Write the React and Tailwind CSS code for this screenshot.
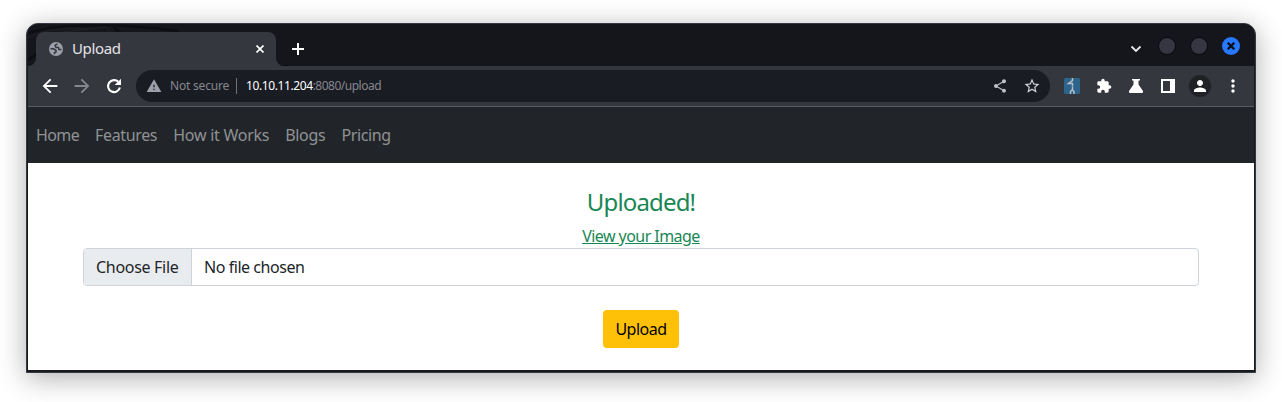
import { MdArrowBack, MdArrowForward, MdWarning, MdShare, MdStarBorder, MdExtension, MdPerson, MdMoreVert } from "react-icons/md";

function TitleBar() {
  return (
    <div className="relative flex h-[42px] shrink-0 overflow-hidden rounded-t-[10px] bg-[#15161b]">
      <svg className="absolute left-0 top-0" width="260" height="42" fill="none" aria-hidden="true">
        <path d="M0 9C30 0 80-2 150 7M0 36L12 28M84 1l8 8" stroke="#0d0e12" strokeWidth="2.5" />
        <path d="M34 8l44-5 6 6M0 14C14 6 30 4 60 5" stroke="#202227" strokeWidth="1" />
        <path d="M248 41.500h12" stroke="#08090c" />
      </svg>
      <div className="relative ml-2 mt-2 flex h-[34px] w-[240px] items-center rounded-t-[8px] bg-[#35373f] pl-[13px]">
        <svg width="14" height="14" viewBox="0 0 14 14" fill="none">
          <circle cx="7" cy="7" r="7" fill="#9da0aa" />
          <path d="M8.500 1.800L6 3.300L7 5.500H9.500L10 7.500H12.500" stroke="#35373f" strokeWidth="1.500" />
          <path d="M1.500 6.800H4.500L7 8.500V10L5.500 10.500V12.300" stroke="#35373f" strokeWidth="1.500" />
        </svg>
        <span className="ml-[9px] pb-px text-[15px] tracking-[-0.35px] text-[#e4e4e7]">Upload</span>
        <svg className="ml-auto mr-[12px]" width="8" height="8" viewBox="0 0 8 8"><path d="M0.500 0.500l7 7M7.500 0.500l-7 7" stroke="white" strokeWidth="1.7" /></svg>
        <svg className="absolute -left-2 bottom-0" width="8" height="8"><path d="M8 0v8H0a8 8 0 0 0 8-8" fill="#35373f" /></svg>
        <svg className="absolute -right-2 bottom-0" width="8" height="8"><path d="M0 0v8h8a8 8 0 0 1-8-8" fill="#35373f" /></svg>
      </div>
      <svg className="ml-[16px] mt-[19px]" width="12" height="12" viewBox="0 0 12 12"><path d="M6 0v12M0 6h12" stroke="white" strokeWidth="2" /></svg>
      <div className="ml-auto flex h-[42px] items-start pr-[14px] pt-[12px]">
        <svg className="mt-[9px]" width="12" height="8" viewBox="0 0 12 8" fill="none"><path d="M1.500 1.500L6 6l4.500-4.500" stroke="#e8e8ea" strokeWidth="1.8" /></svg>
        <span className="ml-[16px] mt-px size-[18px] rounded-full border border-[#08090c] bg-[#353641]" />
        <span className="ml-[14px] mt-px size-[18px] rounded-full border border-[#08090c] bg-[#353641]" />
        <span className="ml-[14px] mt-px flex size-[18px] items-center justify-center rounded-full bg-[#2777ff]">
          <svg width="8" height="8" viewBox="0 0 8 8"><path d="M.7.7l6.600 6.600M7.300.7L.7 7.300" stroke="#0b0c14" strokeWidth="2.2" /></svg>
        </span>
      </div>
    </div>
  );
}

function Toolbar() {
  return (
    <div className="flex h-[41px] shrink-0 items-center border-b border-[#5a5c62] bg-[#35373f]">
      <MdArrowBack className="ml-[11px] size-[22px] shrink-0 text-white" />
      <MdArrowForward className="ml-[10px] size-[22px] shrink-0 text-[#86888d]" />
      <svg className="ml-[10px] shrink-0" width="22" height="22" viewBox="0 0 22 22" fill="none">
        <path d="M15.300 6.800A6 6 0 1 0 16.900 12.600" stroke="white" strokeWidth="2.1" />
        <path d="M18 3.700V10h-6.300z" fill="white" />
      </svg>
      <div className="ml-[11px] flex h-8 w-[914px] shrink-0 items-center rounded-full bg-[#1a1c24]">
        <MdWarning className="ml-[10px] size-[16px] text-[#9da0aa]" />
        <span className="ml-[8px] w-[59px] whitespace-nowrap text-[12px] tracking-[-0.2px] text-[#85878d]">Not secure</span>
        <span className="ml-[7px] h-4 w-px bg-[#6f7177]" />
        <span className="ml-[9px] whitespace-nowrap text-[12px] tracking-[-0.5px] text-[#85878d]"><span className="tracking-[-0.4px] text-white">10.10.11.204</span>:8080/upload</span>
        <MdShare className="ml-auto size-[16px] text-[#bfc1c5]" />
        <MdStarBorder className="ml-[15px] mr-[9px] size-[18px] text-[#d0d2d5]" />
      </div>
      <svg className="ml-[14px] shrink-0" width="16" height="16" viewBox="0 0 16 16" fill="none">
        <rect width="16" height="16" rx="1.5" fill="#2d648c" />
        <path d="M8.500 0v2.500L4.500 5.500h4v3M8.500 9v3M8 12L6.500 13.500V16M8.500 12l1.500 1.500V16" stroke="#b7bec4" strokeWidth="1.500" />
      </svg>
      <MdExtension className="ml-[16px] size-[16px] shrink-0 text-white" />
      <svg className="ml-[16px] shrink-0" width="16" height="16" viewBox="0 0 16 16" fill="white"><path d="M4 1h8v1.500h-1.500v4L15 13q.5 2-1 2H2q-1.500 0-1-2L5.500 6.500v-4H4z" /></svg>
      <svg className="ml-[16px] shrink-0" width="16" height="16" viewBox="0 0 16 16"><path fillRule="evenodd" fill="white" d="M1 1h14v14H1zM3 3v10h7V3z" /></svg>
      <span className="ml-[13px] flex size-[22px] shrink-0 items-center justify-center rounded-full bg-[#202124]"><MdPerson className="size-[18px] text-white" /></span>
      <MdMoreVert className="ml-[12px] size-[20px] shrink-0 text-white" />
    </div>
  );
}

function Page() {
  return (
    <>
      <nav className="flex h-14 shrink-0 items-center gap-4 bg-[#212529] pl-2 text-[16px] leading-6 text-[#909294]">
        <span className="w-[43px] whitespace-nowrap tracking-[-0.6px]">Home</span>
        <span className="w-[62.2px] whitespace-nowrap tracking-[-0.35px]">Features</span>
        <span className="w-[96px] whitespace-nowrap tracking-[-0.25px]">How it Works</span>
        <span className="w-[40.300px] whitespace-nowrap tracking-[-0.3px]">Blogs</span>
        <span className="w-[49px] whitespace-nowrap tracking-[-0.4px]">Pricing</span>
      </nav>
      <main className="flex h-[207px] flex-col items-center bg-white px-[55px] pt-6">
        <h1 className="h-[29px] text-[24px] leading-[29px] tracking-[-0.85px] text-[#198754]">Uploaded!</h1>
        <a className="mt-2 h-6 text-[16px] leading-6 tracking-[-0.55px] text-[#198754] underline">View your Image</a>
        <div className="flex h-[38px] w-full overflow-hidden rounded-[4px] border border-[#ced4da] text-[16px] leading-9 text-[#212529]">
          <span className="w-[108px] whitespace-nowrap border-r border-[#ced4da] bg-[#e9ecef] pl-3 tracking-[-0.3px]">Choose File</span>
          <span className="pl-3 tracking-[-0.45px]">No file chosen</span>
        </div>
        <button className="mt-6 h-[38px] w-[76px] rounded-[4px] bg-[#ffc107] text-[16px] tracking-[-0.5px] text-black">Upload</button>
      </main>
    </>
  );
}

export default function App() {
  return (
    <div className="h-[402px] w-[1282px] overflow-hidden bg-white pl-[26px] pt-[23px] font-['Noto_Sans',sans-serif]">
      <div className="flex h-[350px] w-[1230px] flex-col rounded-t-[12px] border border-[#36383f] bg-[#181a22] px-px pb-[2px] shadow-[0_5px_28px_rgba(0,0,0,0.32)]">
        <TitleBar />
        <Toolbar />
        <Page />
      </div>
    </div>
  );
}
